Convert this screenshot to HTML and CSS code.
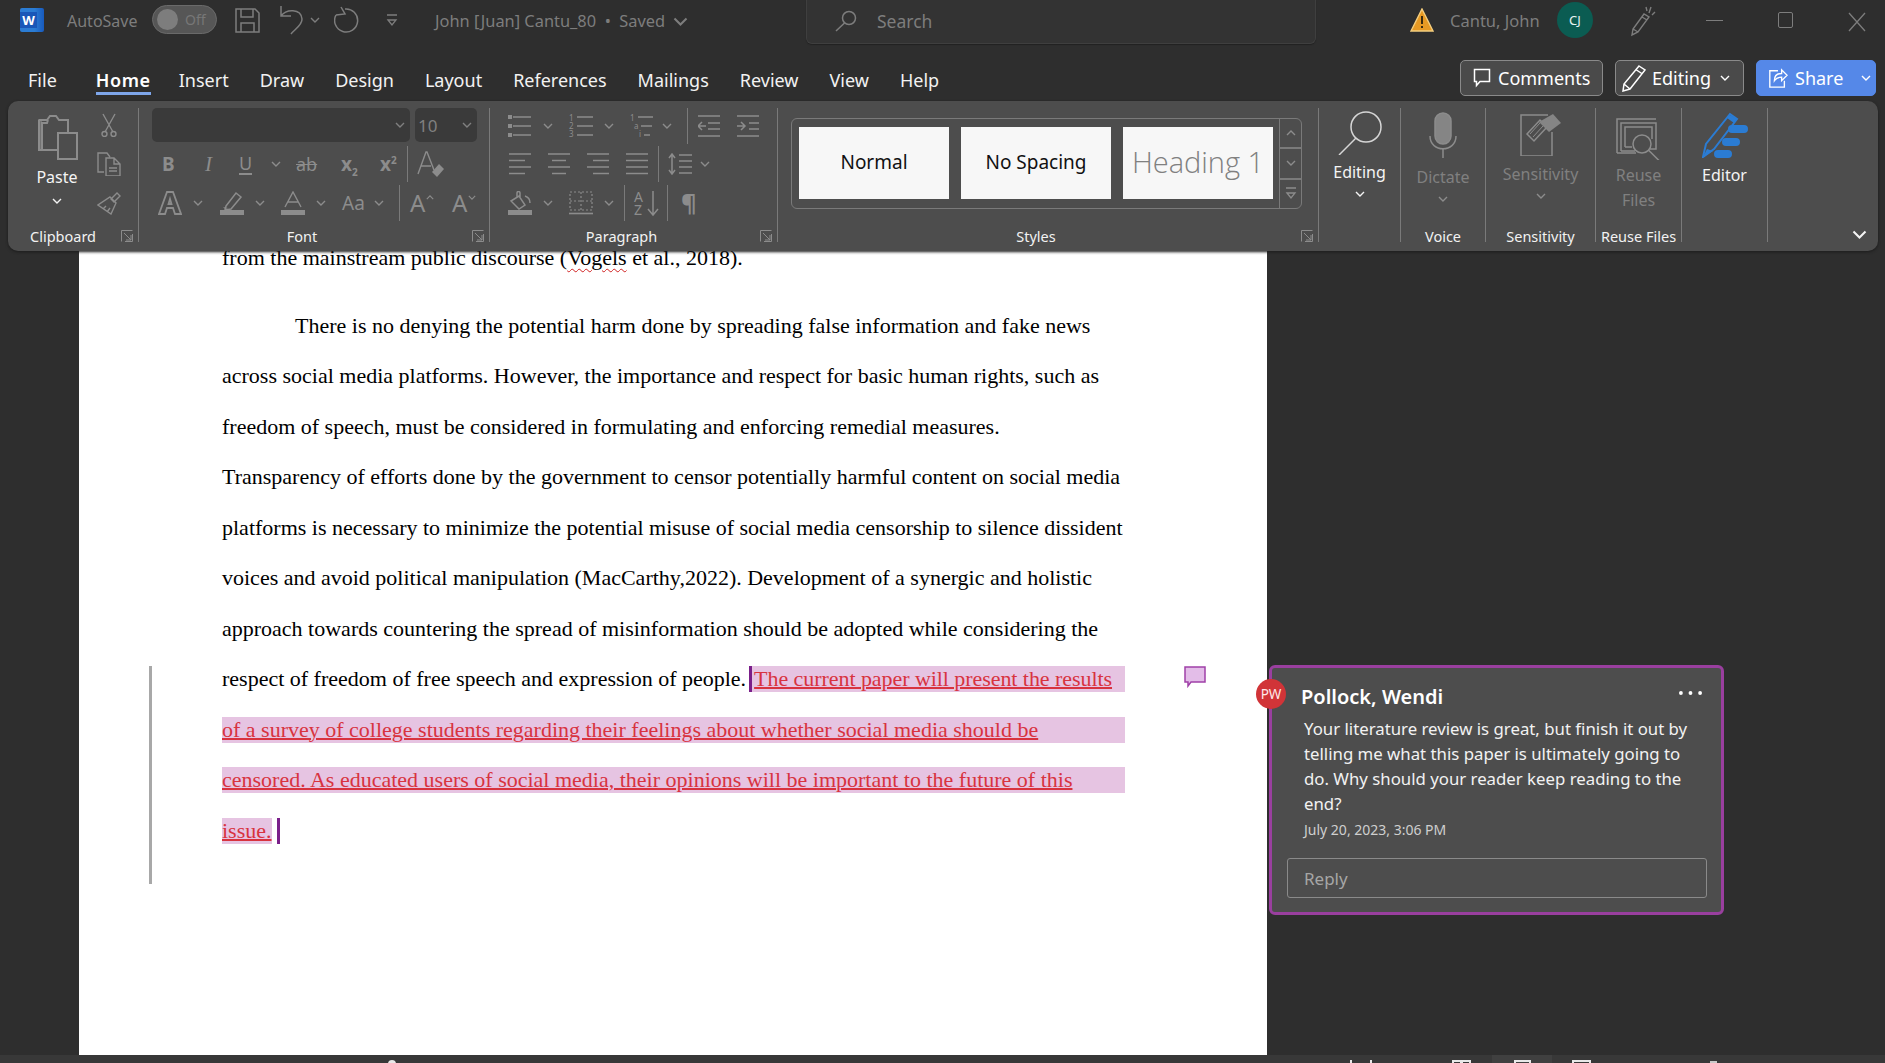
FILE: index.html
```html
<!DOCTYPE html>
<html lang="en">
<head>
    <meta charset="UTF-8">
    <title>John [Juan] Cantu_80 - Word</title>
    <link rel="stylesheet" href="styles.css">
</head>
<body>
    <svg class="defs" width="0" height="0">
        <symbol id="i-chev" viewBox="0 0 10 6"><path d="M1 1l4 4 4-4" fill="none" stroke="currentColor" stroke-width="1.4"/></symbol>
        <symbol id="i-save" viewBox="0 0 25 25"><path d="M1 1h19l4 4v19H1zM6 1v8h12V1M6 24v-9h13v9" fill="none" stroke="currentColor" stroke-width="1.5"/></symbol>
        <symbol id="i-undo" viewBox="0 0 28 32"><path d="M3 2v10h10M3 12C8 5 23 4 24 15c.5 6-8 11-11 15" fill="none" stroke="currentColor" stroke-width="1.5"/></symbol>
        <symbol id="i-redo" viewBox="0 0 26 30"><path d="M7 3l4 7-9 1M11 5a11.500 11.500 0 1 1-9 6" fill="none" stroke="currentColor" stroke-width="1.5"/></symbol>
        <symbol id="i-custom" viewBox="0 0 12 14"><path d="M1 1h10M2 6l4 5 4-5z" fill="none" stroke="currentColor" stroke-width="1.3"/></symbol>
        <symbol id="i-search" viewBox="0 0 22 22"><circle cx="14" cy="8" r="6.5" fill="none" stroke="currentColor" stroke-width="1.5"/><path d="M9.5 13L1 21" stroke="currentColor" stroke-width="1.5"/></symbol>
        <symbol id="i-warn" viewBox="0 0 24 24"><path d="M12 1L23 23H1z" fill="#e79a24" stroke="#f5cf7f" stroke-width="1.4"/><path d="M12 8v8M12 18v2" stroke="#3a2a10" stroke-width="2"/></symbol>
        <symbol id="i-pen" viewBox="0 0 26 32"><path d="M14 9L3 24l-1 6 6-3L19 12zM12 12l5 3M3 24l5 3M19 8l2-6M22 10l3-3M17 6l-1-4" fill="none" stroke="currentColor" stroke-width="1.4"/></symbol>
        <symbol id="i-x" viewBox="0 0 18 20"><path d="M1 1l16 18M17 1L1 19" fill="none" stroke="currentColor" stroke-width="1.3"/></symbol>
        <symbol id="i-comment" viewBox="0 0 18 20"><path d="M1.5 1.5h15v12H7l-3.5 4v-4h-2z" fill="none" stroke="currentColor" stroke-width="1.5"/></symbol>
        <symbol id="i-pencil" viewBox="0 0 26 28"><path d="M18 2l6 4L9 25l-7 2 1-7zM15.500 6l6 4M3 20l6 5" fill="none" stroke="currentColor" stroke-width="1.5"/></symbol>
        <symbol id="i-share" viewBox="0 0 22 24"><path d="M11 4H2v18h16v-7M7 15c0-6 4-8 8-8V3l6 6-6 6v-4c-4 0-6 1-8 4z" fill="none" stroke="currentColor" stroke-width="1.5"/></symbol>
        <symbol id="i-paste" viewBox="0 0 41 46"><path d="M2 6h8l3-4h6l3 4h9v12M2 6v30h3V9h5l1-3M5 36h16" fill="none" stroke="currentColor" stroke-width="2"/><rect x="1" y="5" width="4" height="32" fill="currentColor" opacity=".6"/><rect x="21" y="19" width="19" height="26" fill="#4d4d4d" stroke="currentColor" stroke-width="2"/></symbol>
        <symbol id="i-cut" viewBox="0 0 16 24"><path d="M2 1l10 18M14 1L4 19" fill="none" stroke="currentColor" stroke-width="1.4"/><circle cx="3.500" cy="21" r="2.500" fill="none" stroke="currentColor" stroke-width="1.400"/><circle cx="12.500" cy="21" r="2.500" fill="none" stroke="currentColor" stroke-width="1.400"/></symbol>
        <symbol id="i-copy" viewBox="0 0 24 24"><path d="M7 20H1V1h9l3 4M9 6h8l6 6v12H9zM17 6v6h6M12 16h8M12 19h8" fill="none" stroke="currentColor" stroke-width="1.4"/></symbol>
        <symbol id="i-brush" viewBox="0 0 24 24"><path d="M14 8l6-6 3 3-6 6zM13 6l6 6-5 11-13-9zM6 18l3-3M10 21l3-4" fill="none" stroke="currentColor" stroke-width="1.4"/></symbol>
        <symbol id="i-launch" viewBox="0 0 12 12"><path d="M.5 11.500V.5h11M3 3l7 7M10 5v5H5M11.500 4v7.500H4" fill="none" stroke="currentColor" stroke-width="1"/></symbol>
        <symbol id="i-hl" viewBox="0 0 24 24"><path d="M6 15L16 2l5 4-10 12-6 1z" fill="none" stroke="currentColor" stroke-width="1.5"/><path d="M3 16l5 1-3 1z" fill="currentColor"/><rect y="19" width="24" height="5" fill="currentColor"/></symbol>
        <symbol id="i-acolor" viewBox="0 0 24 24"><path d="M4 16L12 1l8 15M7 11h10" fill="none" stroke="currentColor" stroke-width="1.4"/><rect y="19" width="24" height="5" fill="currentColor"/></symbol>
        <symbol id="i-aout" viewBox="0 0 24 24"><path d="M1 23L9 1h6l8 22h-6l-2-6H9l-2 6zM10.500 13h3L12 8z" fill="none" stroke="currentColor" stroke-width="1.800"/></symbol>
        <symbol id="i-aerase" viewBox="0 0 28 28"><path d="M1 24L9 2h1l7 18M4 16h10" fill="none" stroke="currentColor" stroke-width="1.4"/><path d="M15 22l7-8 5 5-7 8z" fill="currentColor"/></symbol>
        <symbol id="i-bul" viewBox="0 0 24 22"><path d="M5 2h18M5 11h18M5 20h18" stroke="currentColor" stroke-width="1.600"/><path d="M0 0h4v4H0zM0 9h4v4H0zM0 18h4v4H0z" fill="currentColor"/></symbol>
        <symbol id="i-dec" viewBox="0 0 22 22"><path d="M0 1h22M10 8h12M10 14h12M0 21h22M0 11h8M4 7l-4 4 4 4" fill="none" stroke="currentColor" stroke-width="1.500"/></symbol>
        <symbol id="i-inc" viewBox="0 0 22 22"><path d="M0 1h22M12 8h10M12 14h10M0 21h22M0 11h8M4 7l4 4-4 4" fill="none" stroke="currentColor" stroke-width="1.500"/></symbol>
        <symbol id="i-al" viewBox="0 0 22 22"><path d="M0 1h22M0 7.500h16M0 14h22M0 20.500h16" stroke="currentColor" stroke-width="1.500"/></symbol>
        <symbol id="i-ac" viewBox="0 0 22 22"><path d="M0 1h22M4 7.500h14M0 14h22M4 20.500h14" stroke="currentColor" stroke-width="1.500"/></symbol>
        <symbol id="i-ar" viewBox="0 0 22 22"><path d="M0 1h22M6 7.500h16M0 14h22M6 20.500h16" stroke="currentColor" stroke-width="1.500"/></symbol>
        <symbol id="i-aj" viewBox="0 0 22 22"><path d="M0 1h22M0 7.500h22M0 14h22M0 20.500h22" stroke="currentColor" stroke-width="1.500"/></symbol>
        <symbol id="i-ls" viewBox="0 0 24 22"><path d="M4 1v20M1 5l3-4 3 4M1 17l3 4 3-4M11 2h13M11 8h13M11 14h13M11 20h13" fill="none" stroke="currentColor" stroke-width="1.500"/></symbol>
        <symbol id="i-fill" viewBox="0 0 24 24"><path d="M3 10l8-5 6 9-6 4zM9 6V2c0-2 3-2 3 0v5M17 5c3 1 5 3 5 7" fill="none" stroke="currentColor" stroke-width="1.500"/><rect y="19" width="24" height="5" fill="currentColor"/></symbol>
        <symbol id="i-bord" viewBox="0 0 24 24"><path d="M1 1h22v18H1zM12 1v18M1 10h22" fill="none" stroke="currentColor" stroke-width="1.200" stroke-dasharray="2 2"/><path d="M0 22.500h24" stroke="currentColor" stroke-width="1.600"/></symbol>
        <symbol id="i-find" viewBox="0 0 44 44"><circle cx="28" cy="16" r="15" fill="none" stroke="currentColor" stroke-width="1.500"/><path d="M18 27L1 44" stroke="currentColor" stroke-width="1.500"/></symbol>
        <symbol id="i-mic" viewBox="0 0 28 46"><rect x="6" y="1" width="16" height="31" rx="8" fill="#858585" stroke="currentColor" stroke-width="1.500"/><path d="M1 24c0 17 26 17 26 0M14 37v9" fill="none" stroke="currentColor" stroke-width="1.500"/></symbol>
        <symbol id="i-sens" viewBox="0 0 42 44"><path d="M28 3H1v41h31V20" fill="none" stroke="currentColor" stroke-width="1.500"/><path d="M7 22L20 8l7 7-13 14z" fill="none" stroke="currentColor" stroke-width="1.500"/><path d="M10 22l10-11M13 25l10-11" stroke="currentColor"/><path d="M19 10l14-8 8 9-12 9z" fill="#858585"/></symbol>
        <symbol id="i-reuse" viewBox="0 0 45 42"><path d="M1 35V1h39M5 33V5h35v26H34M9 29V9h27v12" fill="none" stroke="currentColor" stroke-width="1.500"/><path d="M1 35h19M5 33h14M9 29h7" stroke="currentColor" stroke-width="1.500"/><circle cx="26" cy="26" r="9" fill="#4d4d4d" stroke="currentColor" stroke-width="1.500"/><path d="M32 33l12 9" stroke="currentColor" stroke-width="1.500" transform="rotate(8 38 37)"/></symbol>
        <symbol id="i-editor" viewBox="0 0 46 46"><path d="M1 45l3-13L28 2l7 5-23 30z" fill="none" stroke="#2b7cd3" stroke-width="2"/><path d="M28 3l7 4-3 4-7-5z" fill="#2b7cd3"/><path d="M1 45l4-8 6 2z" fill="#2b7cd3"/><rect x="26" y="13" width="20" height="8" rx="4" fill="#2b7cd3"/><rect x="20" y="26" width="18" height="8" rx="4" fill="#2b7cd3"/><rect x="12" y="38" width="18" height="8" rx="4" fill="#2b7cd3"/></symbol>
    </svg>

    <header class="titlebar">
        <div class="word-logo"><span class="word-logo-w">W</span></div>
        <span class="autosave">AutoSave</span>
        <div class="toggle"><span class="knob"></span><span>Off</span></div>
        <svg class="qat qat-save"><use href="#i-save"/></svg>
        <svg class="qat qat-undo"><use href="#i-undo"/></svg>
        <svg class="chev qat-undo-chev"><use href="#i-chev"/></svg>
        <svg class="qat qat-redo"><use href="#i-redo"/></svg>
        <svg class="qat qat-custom"><use href="#i-custom"/></svg>
        <div class="doc-title">John [Juan] Cantu_80 &nbsp;•&nbsp; Saved <svg class="title-chev"><use href="#i-chev"/></svg></div>
        <div class="searchbox"><svg class="search-icon"><use href="#i-search"/></svg><span>Search</span></div>
        <svg class="warn"><use href="#i-warn"/></svg>
        <span class="username">Cantu, John</span>
        <div class="user-avatar">CJ</div>
        <svg class="tb-pen"><use href="#i-pen"/></svg>
        <div class="winctl">
            <span class="win-min"></span>
            <span class="win-max"></span>
            <svg class="win-close"><use href="#i-x"/></svg>
        </div>
    </header>

    <nav class="tabsrow">
        <a class="tab tab-file">File</a>
        <a class="tab active">Home</a>
        <a class="tab">Insert</a>
        <a class="tab">Draw</a>
        <a class="tab">Design</a>
        <a class="tab">Layout</a>
        <a class="tab">References</a>
        <a class="tab">Mailings</a>
        <a class="tab">Review</a>
        <a class="tab">View</a>
        <a class="tab">Help</a>
        <div class="tab-actions">
            <button class="tbtn tbtn-comments"><svg class="tbtn-ic-c"><use href="#i-comment"/></svg>Comments</button>
            <button class="tbtn tbtn-editing"><svg class="tbtn-ic-e"><use href="#i-pencil"/></svg>Editing<svg class="chev tbtn-chev"><use href="#i-chev"/></svg></button>
            <button class="tbtn tbtn-share"><svg class="tbtn-ic-s"><use href="#i-share"/></svg>Share<svg class="chev share-chev"><use href="#i-chev"/></svg></button>
        </div>
    </nav>

    <section class="ribbon">
        <div class="group g-clip">
            <div class="g-body clip-body">
                <div class="paste">
                    <svg class="ic-paste"><use href="#i-paste"/></svg>
                    <span class="bigtext paste-text">Paste</span>
                    <svg class="chev chev-w"><use href="#i-chev"/></svg>
                </div>
                <div class="clip-small">
                    <svg class="ic-cut"><use href="#i-cut"/></svg>
                    <svg class="ic24"><use href="#i-copy"/></svg>
                    <svg class="ic24"><use href="#i-brush"/></svg>
                </div>
            </div>
            <div class="glabel">Clipboard<svg class="launch"><use href="#i-launch"/></svg></div>
        </div>

        <div class="group g-font">
            <div class="g-body rows">
                <div class="font-r1">
                    <div class="combo combo-name"><svg class="chev"><use href="#i-chev"/></svg></div>
                    <div class="combo combo-size"><span>10</span><svg class="chev"><use href="#i-chev"/></svg></div>
                </div>
                <div class="row font-r2">
                    <span class="glyph gb">B</span>
                    <span class="glyph gi">I</span>
                    <span class="btn"><span class="glyph gu">U</span><svg class="chev"><use href="#i-chev"/></svg></span>
                    <span class="glyph gs">ab</span>
                    <span class="glyph gx">x<sub>2</sub></span>
                    <span class="glyph gx">x<sup>2</sup></span>
                    <i class="vsep"></i>
                    <svg class="ic28"><use href="#i-aerase"/></svg>
                </div>
                <div class="row font-r3">
                    <span class="btn"><svg class="ic24"><use href="#i-aout"/></svg><svg class="chev"><use href="#i-chev"/></svg></span>
                    <span class="btn"><svg class="ic24"><use href="#i-hl"/></svg><svg class="chev"><use href="#i-chev"/></svg></span>
                    <span class="btn"><svg class="ic24"><use href="#i-acolor"/></svg><svg class="chev"><use href="#i-chev"/></svg></span>
                    <span class="btn"><span class="glyph gaa">Aa</span><svg class="chev"><use href="#i-chev"/></svg></span>
                    <i class="vsep"></i>
                    <span class="glyph gsize">A<svg class="chev size-up"><use href="#i-chev"/></svg></span>
                    <span class="glyph gsize">A<svg class="chev"><use href="#i-chev"/></svg></span>
                </div>
            </div>
            <div class="glabel glabel-shift">Font<svg class="launch"><use href="#i-launch"/></svg></div>
        </div>

        <div class="group g-para">
            <div class="g-body rows">
                <div class="row para-r1">
                    <span class="btn"><svg class="ic-list"><use href="#i-bul"/></svg><svg class="chev"><use href="#i-chev"/></svg></span>
                    <span class="btn">
                        <svg class="ic-list" viewBox="0 0 24 22"><path d="M8 2h16M8 11h16M8 20h16" stroke="currentColor" stroke-width="1.600"/><text x="0" y="6" class="tiny">1</text><text x="0" y="14" class="tiny">2</text><text x="0" y="22" class="tiny">3</text></svg>
                        <svg class="chev"><use href="#i-chev"/></svg>
                    </span>
                    <span class="btn">
                        <svg class="ic-list" viewBox="0 0 24 22"><path d="M8 2h15M11 11h11M14 20h6" stroke="currentColor" stroke-width="1.600"/><text x="0" y="6" class="tiny">1</text><text x="4" y="14" class="tiny">a</text><text x="9" y="22" class="tiny">i</text></svg>
                        <svg class="chev chev-near"><use href="#i-chev"/></svg>
                    </span>
                    <i class="vsep"></i>
                    <svg class="ic-al"><use href="#i-dec"/></svg>
                    <svg class="ic-al"><use href="#i-inc"/></svg>
                </div>
                <div class="row para-r2">
                    <svg class="ic-al"><use href="#i-al"/></svg>
                    <svg class="ic-al"><use href="#i-ac"/></svg>
                    <svg class="ic-al"><use href="#i-ar"/></svg>
                    <svg class="ic-al"><use href="#i-aj"/></svg>
                    <i class="vsep"></i>
                    <span class="btn"><svg class="ic-list"><use href="#i-ls"/></svg><svg class="chev chev-near"><use href="#i-chev"/></svg></span>
                </div>
                <div class="row para-r3">
                    <span class="btn"><svg class="ic24"><use href="#i-fill"/></svg><svg class="chev"><use href="#i-chev"/></svg></span>
                    <span class="btn"><svg class="ic24"><use href="#i-bord"/></svg><svg class="chev"><use href="#i-chev"/></svg></span>
                    <i class="vsep"></i>
                    <svg class="ic-sort" viewBox="0 0 24 26"><path d="M19 1v23M14 19l5 6 5-6" fill="none" stroke="currentColor" stroke-width="1.500"/><text x="0" y="12" class="az">A</text><text x="0" y="25" class="az">Z</text></svg>
                    <i class="vsep"></i>
                    <span class="glyph gp">¶</span>
                </div>
            </div>
            <div class="glabel glabel-shift">Paragraph<svg class="launch"><use href="#i-launch"/></svg></div>
        </div>

        <div class="group g-styles">
            <div class="g-body">
                <div class="gallery">
                    <div class="tile">Normal</div>
                    <div class="tile">No Spacing</div>
                    <div class="tile tile-h1">Heading 1</div>
                    <div class="gal-scroll">
                        <span><svg class="chev"><use href="#i-chev"/></svg></span>
                        <span><svg class="chev"><use href="#i-chev"/></svg></span>
                        <span><svg class="gal-more"><use href="#i-custom"/></svg></span>
                    </div>
                </div>
            </div>
            <div class="glabel glabel-shift">Styles<svg class="launch"><use href="#i-launch"/></svg></div>
        </div>

        <div class="group g-edit">
            <div class="g-body big">
                <svg class="ic-find"><use href="#i-find"/></svg>
                <span class="bigtext">Editing</span>
                <svg class="chev chev-w"><use href="#i-chev"/></svg>
            </div>
            <div class="glabel glabel-empty"></div>
        </div>
        <div class="group g-voice">
            <div class="g-body big off">
                <svg class="ic-mic"><use href="#i-mic"/></svg>
                <span class="bigtext">Dictate</span>
                <svg class="chev"><use href="#i-chev"/></svg>
            </div>
            <div class="glabel">Voice</div>
        </div>
        <div class="group g-sens">
            <div class="g-body big off">
                <svg class="ic-sens"><use href="#i-sens"/></svg>
                <span class="bigtext">Sensitivity</span>
                <svg class="chev"><use href="#i-chev"/></svg>
            </div>
            <div class="glabel">Sensitivity</div>
        </div>
        <div class="group g-reuse">
            <div class="g-body big off">
                <svg class="ic-reuse"><use href="#i-reuse"/></svg>
                <span class="bigtext">Reuse<br>Files</span>
            </div>
            <div class="glabel">Reuse Files</div>
        </div>
        <div class="group g-editor">
            <div class="g-body big">
                <svg class="ic-editor"><use href="#i-editor"/></svg>
                <span class="bigtext">Editor</span>
            </div>
            <div class="glabel glabel-empty"></div>
        </div>
        <div class="ribbon-end"><svg class="collapse"><use href="#i-chev"/></svg></div>
    </section>

    <main class="workspace">
        <article class="page">
            <div class="ln ln-first">from the mainstream public discourse (<span class="spell">Vogels</span> et al., 2018).</div>
            <div class="ln ln-indent">There is no denying the potential harm done by spreading false information and fake news</div>
            <div class="ln">across social media platforms. However, the importance and respect for basic human rights, such as</div>
            <div class="ln">freedom of speech, must be considered in formulating and enforcing remedial measures.</div>
            <div class="ln">Transparency of efforts done by the government to censor potentially harmful content on social media</div>
            <div class="ln">platforms is necessary to minimize the potential misuse of social media censorship to silence dissident</div>
            <div class="ln">voices and avoid political manipulation (MacCarthy,2022). Development of a synergic and holistic</div>
            <div class="ln">approach towards countering the spread of misinformation should be adopted while considering the</div>
            <div class="ln ln-flex">respect of freedom of free speech and expression of people. <span class="hl hl-start"><u>The current paper will present the results</u></span></div>
            <div class="ln ln-flex"><span class="hl"><u>of a survey of college students regarding their feelings about whether social media should be</u></span></div>
            <div class="ln ln-flex"><span class="hl"><u>censored. As educated users of social media, their opinions will be important to the future of this</u></span></div>
            <div class="ln ln-flex"><span class="hl hl-end"><u>issue.</u></span><i class="caret"></i></div>
            <i class="change-bar"></i>
            <svg class="comment-mark" viewBox="0 0 22 22"><path d="M1 1h20v15H7l-3 4v-4H1z" fill="#e3bde8" stroke="#a040a8" stroke-width="1.500"/></svg>
        </article>

        <aside class="comment-pane">
            <div class="comment-card">
                <div class="comment-avatar">PW</div>
                <div class="comment-head">
                    <span class="comment-author">Pollock, Wendi</span>
                    <svg class="comment-more" viewBox="0 0 24 4"><circle cx="2" cy="2" r="2" fill="#fff"/><circle cx="12" cy="2" r="2" fill="#fff"/><circle cx="22" cy="2" r="2" fill="#fff"/></svg>
                </div>
                <p class="comment-text">Your literature review is great, but finish it out by telling me what this paper is ultimately going to do. Why should your reader keep reading to the end?</p>
                <div class="comment-date">July 20, 2023, 3:06 PM</div>
                <div class="comment-reply">Reply</div>
            </div>
        </aside>
    </main>

    <footer class="statusbar">
        <i class="sb-blob"></i>
        <i class="sb-focus"></i>
        <i class="sb-book"></i>
        <span class="sb-active"><i class="sb-view"></i></span>
        <i class="sb-view sb-web"></i>
        <i class="sb-tick"></i>
    </footer>
</body>
</html>
```

FILE: styles.css
```css
* {
    box-sizing: border-box;
    margin: 0;
    padding: 0;
}

html, body {
    height: 100%;
}

body {
    font-family: 'Noto Sans', sans-serif;
    background-color: #2e2e2e;
    color: #ffffff;
    display: flex;
    flex-direction: column;
    height: 100vh;
    overflow: hidden;
}

.defs {
    position: absolute;
}

svg {
    display: block;
    flex: none;
}

.tiny {
    font: 8px 'Noto Sans', sans-serif;
    fill: currentColor;
}

.az {
    font: 14px 'Noto Sans', sans-serif;
    fill: currentColor;
}

.chev {
    width: 10px;
    height: 6px;
}

/* title bar */
.titlebar {
    height: 62px;
    display: flex;
    align-items: flex-start;
    padding-left: 20px;
    color: #7d7d7d;
    font-size: 16px;
    flex: none;
}

.word-logo {
    width: 24px;
    height: 24px;
    margin-top: 8px;
    background: linear-gradient(90deg, #2b7cd3 60%, #185abd);
    border-radius: 2px;
    position: relative;
}

.word-logo-w {
    display: block;
    width: 17px;
    height: 16px;
    margin-top: 4px;
    background: #1957b8;
    color: #fff;
    font-size: 13px;
    font-weight: 700;
    line-height: 16px;
    text-align: center;
    position: absolute;
}

.autosave {
    margin-left: 23px;
    line-height: 42px;
    width: 85px;
}

.toggle {
    width: 65px;
    height: 29px;
    margin-top: 5px;
    border: 1px solid #6a6a6a;
    border-radius: 15px;
    background: #565656;
    display: flex;
    align-items: center;
    gap: 7px;
    padding-left: 4px;
    font-size: 14px;
    color: #777;
}

.knob {
    width: 21px;
    height: 21px;
    border-radius: 50%;
    background: #7d7d7d;
}

.qat {
    margin-top: 8px;
}

.qat-save {
    width: 25px;
    height: 25px;
    margin-left: 18px;
}

.qat-undo {
    width: 28px;
    height: 32px;
    margin-top: 4px;
    margin-left: 18px;
}

.qat-undo-chev {
    margin-top: 17px;
    margin-left: 4px;
}

.qat-redo {
    width: 26px;
    height: 30px;
    margin-top: 4px;
    margin-left: 14px;
}

.qat-custom {
    width: 12px;
    height: 14px;
    margin-top: 14px;
    margin-left: 26px;
}

.doc-title {
    margin-left: 37px;
    line-height: 42px;
    width: 371px;
    display: flex;
    align-items: center;
    white-space: nowrap;
    font-size: 16.400px;
}

.title-chev {
    width: 15px;
    height: 9px;
    margin-left: 8px;
}

.searchbox {
    width: 510px;
    height: 44px;
    background: #333333;
    border: 1px solid #3f3f3f;
    border-top: none;
    border-radius: 0 0 6px 6px;
    box-shadow: 0 1px 1px #222;
    display: flex;
    align-items: center;
    padding: 0 0 2px 28px;
    gap: 20px;
    font-size: 17.500px;
}

.search-icon {
    width: 22px;
    height: 22px;
}

.warn {
    width: 24px;
    height: 24px;
    margin: 8px 0 0 94px;
}

.username {
    margin-left: 16px;
    width: 107px;
    line-height: 42px;
    white-space: nowrap;
    font-size: 16.500px;
}

.user-avatar {
    width: 36px;
    height: 36px;
    margin-top: 2px;
    border-radius: 50%;
    background: #0b5c52;
    color: #e8f4f2;
    font-size: 13px;
    line-height: 36px;
    text-align: center;
}

.tb-pen {
    width: 26px;
    height: 32px;
    margin: 5px 0 0 37px;
}

.winctl {
    display: flex;
    align-items: flex-start;
    margin-left: 50px;
}

.win-min {
    width: 17px;
    height: 1px;
    margin-top: 20px;
    background: #7d7d7d;
}

.win-max {
    width: 15px;
    height: 16px;
    margin: 12px 0 0 55px;
    border: 1px solid #7d7d7d;
    border-radius: 2px;
}

.win-close {
    width: 18px;
    height: 20px;
    margin: 12px 0 0 55px;
}

/* tabs */
.tabsrow {
    height: 39px;
    flex: none;
    display: flex;
    align-items: flex-start;
    gap: 31px;
    padding-left: 28px;
    font-size: 18px;
    color: #f2f2f2;
}

.tab {
    height: 33px;
    line-height: 36px;
    white-space: nowrap;
}

.tab-file {
    margin-right: 8px;
}

.tab.active {
    font-weight: 600;
    color: #fff;
    letter-spacing: .6px;
    margin-right: -3px;
    border-bottom: 3px solid #7ea6ea;
}

.tab-actions {
    margin-left: auto;
    padding-right: 9px;
    display: flex;
    gap: 12px;
    margin-top: -2px;
}

.tbtn {
    height: 36px;
    border: 1px solid #8a8a8a;
    border-radius: 5px;
    background: #4a4a4a;
    color: #fff;
    font-family: inherit;
    font-size: 18px;
    display: flex;
    align-items: center;
}

.tbtn-comments {
    width: 143px;
    padding-left: 12px;
    gap: 7px;
}

.tbtn-ic-c {
    width: 18px;
    height: 20px;
}

.tbtn-editing {
    width: 129px;
    padding-left: 5px;
    gap: 5px;
}

.tbtn-ic-e {
    width: 26px;
    height: 28px;
}

.tbtn-chev {
    margin-left: 4px;
}

.tbtn-share {
    width: 120px;
    padding-left: 11px;
    gap: 7px;
    background: #5588e8;
    border-color: #5588e8;
}

.tbtn-ic-s {
    width: 20px;
    height: 22px;
}

.share-chev {
    margin-left: 11px;
}

/* ribbon */
.ribbon {
    height: 150px;
    flex: none;
    margin: 0 7px 0 8px;
    background: #4d4d4d;
    border-radius: 10px;
    display: flex;
    padding: 7px 0 9px;
    box-shadow: 0 1px 3px #1c1c1c;
    color: #8c8c8c;
    position: relative;
    z-index: 2;
}

.group {
    border-right: 1px solid #7a7a7a;
    display: flex;
    flex-direction: column;
    flex: none;
}

.g-clip { width: 131px; }
.g-font { width: 351px; }
.g-para { width: 288px; }
.g-styles { width: 541px; }
.g-edit { width: 82px; }
.g-voice { width: 85px; }
.g-sens { width: 110px; }
.g-reuse { width: 86px; }
.g-editor { width: 86px; }

.g-body {
    flex: 1;
    min-height: 0;
}

.glabel {
    height: 22px;
    font-size: 14.500px;
    line-height: 32px;
    color: #f2f2f2;
    text-align: center;
    position: relative;
    white-space: nowrap;
}

.glabel-shift {
    padding-right: 24px;
}

.launch {
    position: absolute;
    right: 5px;
    top: 10px;
    width: 12px;
    height: 12px;
    color: #8c8c8c;
}

.g-clip .glabel {
    text-align: left;
    padding-left: 22px;
}

.bigtext {
    font-size: 16px;
    line-height: 25px;
    color: #f4f4f4;
    text-align: center;
    white-space: nowrap;
}

/* clipboard */
.clip-body {
    display: flex;
}

.paste {
    width: 80px;
    margin-left: 9px;
    padding-top: 6px;
    display: flex;
    flex-direction: column;
    align-items: center;
}

.ic-paste {
    width: 41px;
    height: 46px;
}

.paste-text {
    margin-top: 5px;
}

.chev-w {
    color: #f4f4f4;
    margin-top: 8px;
}

.clip-small {
    width: 24px;
    margin-left: 0;
    padding-top: 5px;
    display: flex;
    flex-direction: column;
    align-items: center;
    gap: 15px;
}

.ic-cut {
    width: 16px;
    height: 24px;
}

.ic24 {
    width: 24px;
    height: 24px;
}

.ic28 {
    width: 28px;
    height: 28px;
}

/* small button rows */
.rows {
    display: flex;
    flex-direction: column;
}

.row {
    display: grid;
    align-items: center;
    justify-items: start;
}

.btn {
    display: flex;
    align-items: center;
    gap: 11px;
}

.vsep {
    display: block;
    width: 1px;
    height: 36px;
    background: #7a7a7a;
}

.glyph {
    color: #8c8c8c;
    line-height: 1;
    white-space: nowrap;
}

.glyph sub, .glyph sup {
    font-size: 10px;
    line-height: 0;
}

.gb { font-size: 19px; font-weight: 700; }
.gi { font-size: 21px; font-style: italic; font-family: 'Liberation Serif', serif; }
.gu { font-size: 18px; border-bottom: 2px solid #8c8c8c; line-height: 19px; }
.gu + .chev { margin-left: 8px; }
.gs { font-size: 18px; text-decoration: line-through; }
.gx { font-size: 19px; font-weight: 700; }
.gaa { font-size: 19px; }
.gaa + .chev { margin-left: -2px; }
.gp { font-size: 24px; font-weight: 700; }

.gsize {
    font-size: 24px;
    display: flex;
    align-items: flex-start;
    gap: 1px;
}

.gsize .chev {
    width: 8px;
    height: 5px;
    margin-top: 4px;
}

.size-up {
    transform: rotate(180deg);
}

/* font group */
.font-r1 {
    display: flex;
    gap: 5px;
    margin: 0 0 4px 13px;
}

.combo {
    height: 34px;
    background: #3a3a3a;
    border-radius: 5px;
    display: flex;
    align-items: center;
    justify-content: space-between;
    padding: 0 5px 0 3px;
    font-size: 17px;
    color: #808080;
}

.combo-name {
    width: 258px;
    justify-content: flex-end;
}

.combo-size {
    width: 62px;
}

.font-r2 {
    height: 36px;
    margin-left: 23px;
    grid-template-columns: 43px 34px 57px 45px 39px 27px 10px auto;
}

.font-r3 {
    height: 36px;
    margin: 3px 0 0 19px;
    grid-template-columns: 62px 61px 61px 57px 11px 42px auto;
}

/* paragraph group */
.para-r1 {
    height: 36px;
    margin-left: 18px;
    grid-template-columns: 61px 61px 57px 11px 39px auto;
}

.para-r2 {
    height: 36px;
    margin: 2px 0 0 19px;
    grid-template-columns: 39px 39px 39px 32px 10px auto;
}

.para-r3 {
    height: 36px;
    margin: 3px 0 0 18px;
    grid-template-columns: 61px 55px 10px 33px 14px auto;
}

.ic-list {
    width: 24px;
    height: 22px;
    overflow: visible;
}

.ic-al {
    width: 22px;
    height: 22px;
}

.ic-sort {
    width: 24px;
    height: 26px;
    overflow: visible;
}

.chev-near {
    margin-left: -3px;
}

/* styles gallery */
.gallery {
    width: 511px;
    height: 91px;
    margin: 10px 0 0 13px;
    border: 1px solid #7a7a7a;
    border-radius: 6px;
    display: flex;
    gap: 12px;
    padding: 8px 0 0 7px;
    position: relative;
}

.tile {
    width: 150px;
    height: 72px;
    background: #f7f7f7;
    color: #111;
    font-size: 19px;
    line-height: 70px;
    text-align: center;
}

.tile-h1 {
    font-size: 29px;
    font-weight: 300;
    color: #808080;
    font-family: 'Open Sans', sans-serif;
    white-space: nowrap;
}

.gal-scroll {
    position: absolute;
    right: 0;
    top: 0;
    bottom: 0;
    width: 22px;
    border-left: 1px solid #7a7a7a;
    display: flex;
    flex-direction: column;
}

.gal-scroll span {
    flex: 1;
    display: flex;
    align-items: center;
    justify-content: center;
    border-bottom: 2px solid #7a7a7a;
}

.gal-scroll span:last-child {
    border-bottom: none;
}

.gal-scroll span:first-child svg {
    transform: rotate(180deg);
}

.gal-more {
    width: 12px;
    height: 14px;
}

/* big buttons */
.big {
    display: flex;
    flex-direction: column;
    align-items: center;
    padding-top: 3px;
}

.big .chev {
    margin-top: 6px;
}

.big .chev-w {
    margin-top: 6px;
}

.off .bigtext {
    color: #808080;
}

.ic-find {
    width: 44px;
    height: 44px;
    color: #d6d6d6;
}

.g-edit .bigtext {
    margin-top: 5px;
}

.ic-mic {
    width: 28px;
    height: 46px;
    margin-top: 1px;
}

.g-voice .bigtext {
    margin-top: 7px;
}

.ic-sens {
    width: 42px;
    height: 44px;
    margin-top: 1px;
}

.g-sens .bigtext {
    margin-top: 6px;
}

.ic-reuse {
    width: 45px;
    height: 42px;
    margin-top: 7px;
}

.g-reuse .bigtext {
    margin-top: 3px;
}

.ic-editor {
    width: 46px;
    height: 46px;
    margin-top: 1px;
}

.g-editor .bigtext {
    margin-top: 5px;
}

.ribbon-end {
    flex: 1;
    display: flex;
    align-items: flex-end;
    justify-content: flex-end;
    padding: 0 11px 3px 0;
}

.collapse {
    width: 15px;
    height: 9px;
    color: #f4f4f4;
}

/* document */
.workspace {
    flex: 1;
    min-height: 0;
    display: flex;
    padding-left: 79px;
    overflow: hidden;
}

.page {
    width: 1188px;
    flex: none;
    background: #ffffff;
    color: #000;
    padding-left: 143px;
    padding-right: 142px;
    font-family: 'Liberation Serif', serif;
    font-size: 22px;
    position: relative;
    overflow: hidden;
}

.ln {
    height: 50.500px;
    line-height: 50.500px;
    white-space: nowrap;
}

.ln-flex {
    display: flex;
    align-items: center;
}

.ln-first {
    margin-top: -18px;
    margin-bottom: 17px;
}

.ln-indent {
    padding-left: 73px;
}

.spell {
    text-decoration: underline wavy #d02020 1px;
    text-underline-offset: 3px;
}

.hl {
    flex: 1;
    height: 26px;
    line-height: 25px;
    background: #e6c4e2;
    color: #d8333f;
}

.hl u {
    text-decoration-thickness: 1.500px;
}

.hl-start {
    margin-left: 3px;
    padding-left: 2px;
    border-left: 3px solid #7a1f8a;
    letter-spacing: -.06px;
}

.hl-end {
    flex: none;
}

.caret {
    width: 3px;
    height: 26px;
    margin-left: 5px;
    background: #7a1f8a;
}

.change-bar {
    position: absolute;
    left: 70px;
    top: 415px;
    width: 3px;
    height: 218px;
    background: #a8a8a8;
}

.comment-mark {
    position: absolute;
    left: 1105px;
    top: 415px;
    width: 22px;
    height: 22px;
}

/* comment card */
.comment-pane {
    flex: none;
    padding: 414px 0 0 2px;
}

.comment-card {
    width: 455px;
    height: 250px;
    background: #4d4d4d;
    border: 3px solid #9a3f9f;
    border-radius: 6px;
    padding: 15px 14px 0 15px;
    position: relative;
}

.comment-avatar {
    position: absolute;
    left: -16px;
    top: 11px;
    width: 30px;
    height: 30px;
    border-radius: 50%;
    background: #d13438;
    color: #ffe8e8;
    font-size: 13.500px;
    line-height: 30px;
    text-align: center;
}

.comment-head {
    display: flex;
    justify-content: space-between;
    padding-left: 14px;
    height: 30px;
}

.comment-author {
    font-size: 20px;
    font-weight: 600;
    line-height: 28px;
}

.comment-more {
    width: 23px;
    height: 4px;
    margin: 8px 5px 0 0;
}

.comment-text {
    padding-left: 17px;
    font-size: 16.800px;
    line-height: 25px;
    color: #f2f2f2;
    margin-top: 3px;
}

.comment-date {
    padding-left: 17px;
    font-size: 14px;
    line-height: 25px;
    color: #cfcfcf;
    margin-top: 1px;
}

.comment-reply {
    height: 40px;
    margin-top: 16px;
    border: 1px solid #8a8a8a;
    border-radius: 3px;
    padding-left: 16px;
    font-size: 17px;
    line-height: 40px;
    color: #a6a6a6;
}

/* status bar, only the top edge is in the window */
.statusbar {
    height: 8px;
    flex: none;
    background: #383838;
    display: flex;
    overflow: hidden;
    position: relative;
    z-index: 2;
}

.sb-blob {
    width: 8px;
    height: 8px;
    margin: 5px 0 0 388px;
    border-radius: 4px 4px 0 0;
    background: #e8e8e8;
}

.sb-focus {
    width: 22px;
    height: 8px;
    margin: 5px 0 0 954px;
    border-left: 2px solid #e8e8e8;
    border-right: 2px solid #e8e8e8;
}

.sb-book {
    width: 19px;
    height: 8px;
    margin: 5px 0 0 80px;
    border: 2px solid #e8e8e8;
    border-bottom: none;
    background: linear-gradient(90deg, transparent 6px, #e8e8e8 6px, #e8e8e8 9px, transparent 9px);
}

.sb-active {
    width: 60px;
    margin-left: 21px;
    background: #404040;
    display: flex;
    justify-content: center;
}

.sb-view {
    width: 17px;
    height: 8px;
    margin-top: 5px;
    border: 2px solid #e8e8e8;
    border-bottom: none;
}

.sb-web {
    width: 19px;
    margin-left: 20px;
}

.sb-tick {
    width: 7px;
    height: 8px;
    margin: 6px 0 0 119px;
    background: #c8c8c8;
}
```
